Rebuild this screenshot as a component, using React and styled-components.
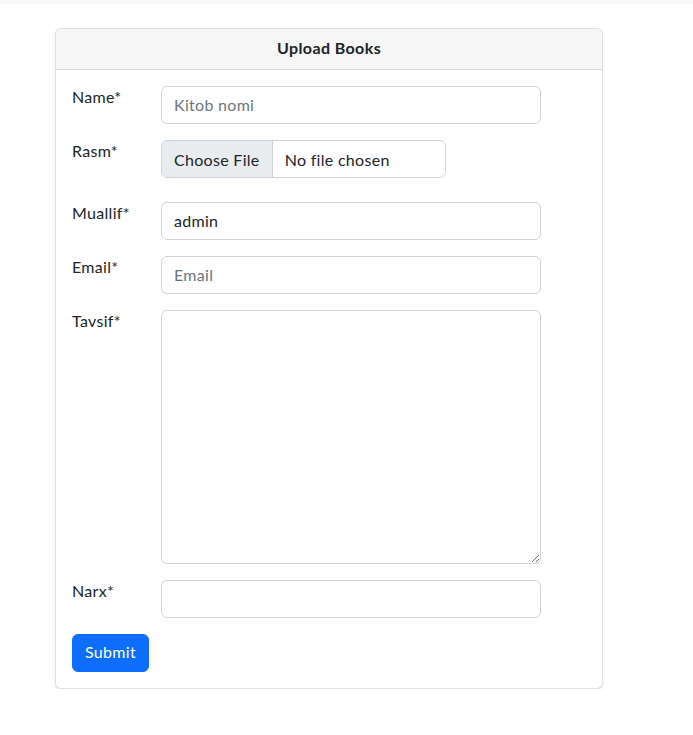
import styled, { createGlobalStyle } from 'styled-components'

const GlobalStyle = createGlobalStyle`
  html, body {
    margin: 0;
    padding: 0;
    background: #fff;
    font-family: Lato, "Liberation Sans", sans-serif;
    font-size: 16px;
    line-height: 1.5;
    letter-spacing: 0.3px;
    color: #212529;
  }
  * {
    box-sizing: border-box;
  }
`

const TopStrip = styled.div`
  height: 4px;
  background-color: #f8f9fa;
`

const Page = styled.main`
  padding: 24px 0 0 55px;
`

const Card = styled.section`
  width: 548px;
  border: 1px solid rgba(0, 0, 0, 0.125);
  border-radius: 6px;
  background: #fff;
  box-shadow: 0 0.125rem 0.25rem rgba(0, 0, 0, 0.075);
`

const CardHeader = styled.h5`
  margin: 0;
  padding: 7px 16px 9px;
  background-color: #f6f6f6;
  border-bottom: 1px solid rgba(0, 0, 0, 0.125);
  border-radius: 5px 5px 0 0;
  font-size: 16px;
  font-weight: 700;
  line-height: 24px;
  letter-spacing: 0.4px;
  text-align: center;
`

const CardBody = styled.form`
  display: flex;
  flex-direction: column;
  gap: 16px;
  padding: 16px;
`

const Row = styled.div`
  display: grid;
  grid-template-columns: 89px 380px;
  align-items: start;
  margin-bottom: ${props => (props.extra ? '8px' : '0')};
`

const Label = styled.label`
  font-size: 16px;
  line-height: 24px;
  margin-top: -1px;
`

const fieldStyles = `
  display: block;
  width: 100%;
  padding: 5px 12px 7px;
  font-family: inherit;
  font-size: 16px;
  line-height: 24px;
  letter-spacing: inherit;
  color: #212529;
  background-color: #fff;
  border: 1px solid #ced4da;
  border-radius: 6px;
  outline: none;

  &::placeholder {
    color: #6c757d;
    opacity: 1;
  }
`

const Input = styled.input`
  ${fieldStyles}
  height: 38px;
`

const TextArea = styled.textarea`
  ${fieldStyles}
  height: 254px;
  resize: vertical;
`

const FileInput = styled.input`
  ${fieldStyles}
  width: 285px;
  height: 38px;
  overflow: hidden;

  &::file-selector-button {
    padding: 6px 12px 8px;
    margin: -5px 12px -7px -12px;
    height: 38px;
    font-family: inherit;
    font-size: 16px;
    letter-spacing: inherit;
    color: #212529;
    background-color: #e9ecef;
    border: 0;
    border-right: 1px solid #ced4da;
    border-radius: 0;
  }
`

const SubmitButton = styled.button`
  align-self: flex-start;
  padding: 5px 12px 7px;
  font-family: inherit;
  font-size: 16px;
  line-height: 24px;
  letter-spacing: inherit;
  color: #fff;
  background-color: #0d6efd;
  border: 1px solid #0d6efd;
  border-radius: 6px;
  cursor: pointer;
`

export default function App() {
  return (
    <>
      <GlobalStyle />
      <TopStrip />
      <Page>
        <Card>
          <CardHeader>Upload Books</CardHeader>
          <CardBody onSubmit={e => e.preventDefault()}>
            <Row>
              <Label htmlFor="name">Name*</Label>
              <Input id="name" type="text" placeholder="Kitob nomi" />
            </Row>
            <Row extra>
              <Label htmlFor="rasm">Rasm*</Label>
              <FileInput id="rasm" type="file" />
            </Row>
            <Row>
              <Label htmlFor="muallif">Muallif*</Label>
              <Input id="muallif" type="text" defaultValue="admin" />
            </Row>
            <Row>
              <Label htmlFor="email">Email*</Label>
              <Input id="email" type="email" placeholder="Email" />
            </Row>
            <Row>
              <Label htmlFor="tavsif">Tavsif*</Label>
              <TextArea id="tavsif" />
            </Row>
            <Row>
              <Label htmlFor="narx">Narx*</Label>
              <Input id="narx" type="text" />
            </Row>
            <SubmitButton type="submit">Submit</SubmitButton>
          </CardBody>
        </Card>
      </Page>
    </>
  )
}
